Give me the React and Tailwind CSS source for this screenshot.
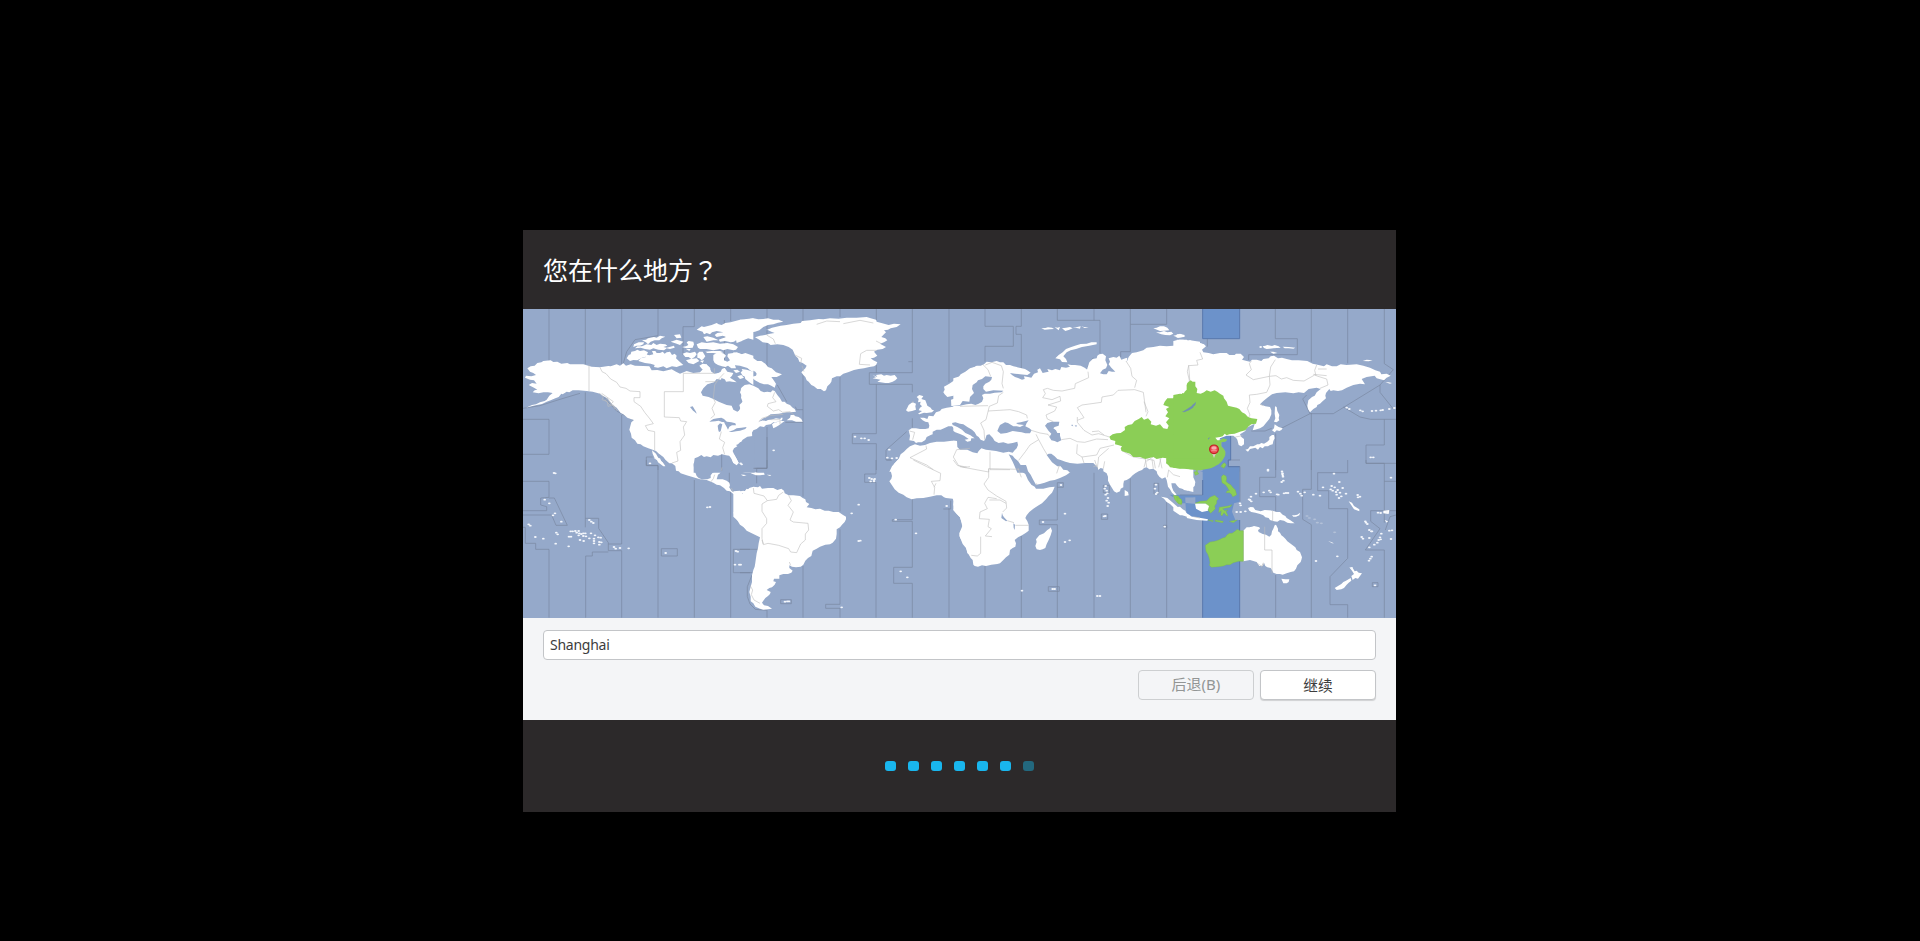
import React from 'react';

const SEA = '#95a9ca';
const BAND = '#6c92ca';
const GREEN = '#8bce56';

/* The map is drawn in eight sheets, each with its own origin. */
const SHEETS = [
  {
    x: 0, y: 0,
    zones:
      'M87 12V168M196 12V178M305 12V182M414 12V92L345 104 320 140 310 175M523 12V65H489V150M613 45V200M632 12V48M9 343H87V448H9M9 310L60 302 120 283 180 265M196 262V495M305 330V495M414 482V495M414 482H379V456H398M250 275 290 318 340 345',
    land: [
      'M22 190 32 184 44 182 52 174 64 172 70 168 92 166 100 171 112 170 124 176 142 174 150 178 190 178 215 185 240 187 265 183 272 184 290 178 300 182 310 175 318 182 332 178 345 182 370 183 388 184 395 196 412 195 430 199 455 193 468 200 480 206 500 198 520 204 540 202 552 190 558 178 568 186 574 200 584 206 596 204 606 214 603 224 590 222 582 232 562 238 550 250 543 262 548 272 566 276 580 282 596 290 620 300 635 302 640 314 652 320 662 314 658 300 668 290 665 272 660 262 666 246 690 242 700 475 448 475 436 464 430 456 415 445 408 438 398 434 385 430 370 424 362 418 352 416 345 406 335 398 333 386 328 374 334 352 342 345 334 343 322 338 310 328 302 324 290 308 278 300 268 288 262 280 248 272 240 266 232 264 218 260 200 258 176 256 158 256 148 262 140 260 128 268 124 266 116 276 106 280 92 286 80 290 66 297 50 300 34 304 18 308 36 300 48 298 60 292 74 288 80 284 88 272 98 264 84 262 70 262 56 265 38 262 44 256 52 254 42 248 26 240 36 234 50 236 42 226 30 224 15 218 18 212 34 214 48 210 40 204 30 200Z',
      'M396 436 408 446 412 454 420 466 428 472 436 484 430 484 422 478 414 472 410 462 404 460 398 446Z',
      'M320 160 326 150 332 148 334 140 345 138 352 134 360 138 372 136 384 142 380 150 376 156 366 158 352 166 340 165 330 168Z',
      'M355 168 362 160 378 156 370 150 376 148 388 151 400 148 396 138 406 138 410 144 420 144 428 140 434 146 440 142 450 140 456 150 464 146 470 152 468 160 474 166 490 180 480 182 470 186 456 184 440 190 430 184 425 185 414 188 402 186 404 180 392 176 375 174Z',
      'M342 118 356 112 372 112 370 118 360 122 350 122 340 126ZM366 106 378 104 384 100 402 96 410 98 420 92 436 95 425 100 418 106 404 106 392 110 384 118 378 112ZM345 130 352 124 366 124 380 118 394 120 400 114 410 120 420 116 436 118 442 122 430 126 440 128 462 122 464 128 450 132 440 130 432 136 415 134 400 130 390 134 375 132 362 128ZM452 110 470 104 490 110 480 120 470 116ZM462 90 480 88 484 98 470 100Z',
      'M486 126 498 124 505 120 500 112 506 108 520 110 522 118 518 128 500 130ZM488 146 500 142 510 144 525 140 530 148 524 156 514 162 506 156 496 156ZM498 166 512 162 530 160 538 168 520 178 506 174ZM532 146 538 140 548 140 556 154 550 162 545 166 538 160 532 158ZM538 182 548 176 560 178 564 184 572 190 562 196 550 196 544 190ZM540 168 552 166 548 174ZM498 132 512 132 508 138Z',
      'M530 74 545 64 552 66 575 60 590 54 596 58 605 60 616 54 632 52 646 48 660 44 674 45 700 40 700 56 680 60 665 66 676 70 690 72 700 76 700 104 684 100 670 106 650 104 642 110 632 112 616 108 600 110 596 104 618 96 608 92 590 96 584 90 592 84 610 82 590 78 576 82 570 88 560 84 552 88 548 80Z',
      'M550 96 562 94 580 98 596 106 580 106 560 110ZM530 118 545 112 560 114 580 112 600 116 622 114 640 118 654 126 648 134 640 136 622 132 610 136 600 132 580 136 560 132 540 132 534 128ZM556 140 575 138 600 138 610 142 592 146 580 144 562 144Z',
      'M580 150 590 144 600 142 612 146 618 152 612 160 612 166 622 170 630 166 622 154 624 146 640 144 650 142 665 148 676 144 700 152 700 202 690 196 680 186 670 180 664 172 655 176 644 178 648 190 634 190 624 182 616 186 606 184 594 180 584 174 580 166Z',
      'M588 208 602 200 606 192 614 188 622 200 640 204 636 212 630 218 642 226 650 232 636 230 620 226 612 222 606 220 598 214Z',
      'M612 216 622 218 636 228 618 230ZM640 196 652 194 660 200 648 204ZM652 214 664 210 672 218 660 222ZM665 192 680 194 700 200 700 240 688 232 676 222 672 206Z',
    ],
    water: [
      'M568 350 574 346 580 342 592 340 604 338 612 342 618 348 622 352 606 351 596 347 586 349Z',
      'M595 376 593 362 600 355 607 358 605 366 602 379 597 381Z',
      'M612 352 622 350 634 352 646 355 648 361 636 361 628 365 624 374 620 366Z',
      'M626 380 640 376 650 370 664 368 680 366 676 372 660 377 648 379 636 381Z',
      'M510 306 518 304 528 320 530 326 518 316Z',
      'M668 404 664 410 660 412 654 418 648 420 652 424 642 430 638 438 642 448 650 462 656 474 650 481 640 474 634 460 628 452 618 451 606 448 594 452 580 450 572 457 560 454 552 456 544 450 534 456 524 460 521 480 521 503 704 503 704 392 682 395Z',
    ],
    borders:
      'M207 178V258M240 187 246 200 258 206 272 222 290 232 300 246 318 250 330 258 360 260V278H342V290L362 304 374 322 390 342 400 356 376 362 384 376 404 380V436M583 190V205H490V260H433V336L478 338 482 348 500 350 490 366 494 390 480 410 482 436 470 442 474 468 456 474M612 205 596 222 584 240 580 280 586 292 576 310 584 330 572 340M604 380 598 402 614 412 608 428 614 448M556 230H590M238 264 250 276 246 284 262 290 264 304 280 300 292 318M245 265 280 290 270 300 256 285 262 280 285 312',
    specks: [],
  },
  {
    x: 660, y: 0,
    zones:
      'M81 12V72M81 76V205M189 12V50M189 200V495M300 12V36M300 216V495M409 12V45M409 180V203M409 238V386H337V416H409V495M517 12V203H388V238H517V262M505 170H517M517 340V368M627 12V232M136 352H189M166 305 170 314H189M81 366V490H40M500 380 438 435V465H455M112 240 140 290',
    land: [
      'M-20 66 0 44 20 42 40 40 55 43 70 42 84 40 100 44 116 44 130 50 114 53 100 58 84 60 70 66 58 76 45 80 34 82 20 90 28 98 12 102 6 108 -10 114Z',
      'M-20 142 0 146 12 150 20 150 30 158 40 160 52 168 64 168 76 176 84 186 95 190 108 202 126 208 118 212 110 216 94 216 100 224 108 236 104 248 94 242 84 238 72 238 60 234 45 226 34 216 48 212 50 206 46 200 34 194 20 188 0 182 -20 180Z',
      'M2 202 10 196 18 196 30 206 26 218 8 212Z',
      'M8 245 14 240 28 238 40 242 55 250 62 258 72 262 82 260 92 262 98 256 104 258 112 270 120 280 126 290 134 290 140 296 150 300 158 308 164 312 168 320 152 322 140 322 116 326 92 328 80 336 68 346 78 348 90 342 108 338 128 338 126 346 114 350 100 352 92 358 78 360 72 366 60 364 50 372 40 376 34 386 24 392 22 400 14 400 22 410 14 418 0 426 -20 436 -18 340 0 312 8 290 3 278 6 262 2 252Z',
      'M140 346 150 338 152 330 162 330 166 334 176 336 184 342 188 350 168 350 156 346Z',
      'M96 358 104 352 110 352 120 348 134 348 126 354 118 360 108 366 100 370Z',
      'M45 97 60 92 75 90 90 86 104 84 94 80 82 74 96 68 122 62 140 60 160 56 182 54 186 48 210 46 236 42 250 43 270 40 296 41 320 38 350 38 380 36 392 40 408 44 410 50 424 54 446 60 462 56 482 58 470 66 452 70 444 74 432 76 438 82 432 88 424 96 436 100 442 106 432 112 420 116 438 126 428 132 412 134 402 140 412 152 402 158 392 160 400 166 412 172 408 180 402 184 388 186 372 190 356 192 342 195 324 202 310 206 300 214 290 214 276 220 274 230 270 236 262 244 258 256 252 259 242 252 232 252 222 244 214 240 206 230 200 226 196 216 190 210 184 202 196 190 200 182 188 174 178 170 174 160 166 152 158 134 146 126 130 120 112 118 92 120 84 114 68 112 58 104Z',
      'M398 210 412 216 408 210 424 208 432 212 440 210 452 212 464 210 472 220 466 226 458 230 446 234 436 234 422 232 412 230 422 224 410 222 398 220 408 217Z',
      'M506 300 514 294 518 292 528 296 526 304 528 314 516 318 504 320 498 316 502 308Z',
      'M530 276 538 270 546 272 550 274 544 282 556 286 560 296 562 302 572 308 576 314 582 316 576 322 560 324 552 323 538 328 534 326 546 318 536 316 540 308 546 304 540 298 542 290 534 292 536 282Z',
      'M612 245 628 236 640 228 648 222 656 216 662 208 676 200 690 190 710 184 710 284 690 292 678 294 672 290 668 286 664 278 662 270 650 266 640 272 622 276 614 268 610 262 614 254Z',
      'M633 284 648 279 650 286 646 292 654 300 646 304 634 303Z',
      'M710 296 690 302 675 300 660 303 648 304 635 306 620 308 605 312 600 318 588 322 580 334 566 332 562 342 552 338 540 338 548 346 556 350 565 352 568 362 566 370 556 372 540 372 528 370 515 370 506 376 510 392 508 406 522 408 528 414 534 412 545 412 556 405 560 396 572 390 578 388 578 380 590 374 602 374 612 370 625 364 636 364 644 372 655 380 664 388 672 390 690 398 710 404Z',
      'M448 500 456 484 468 470 476 462 482 448 492 440 500 432 510 424 525 418 540 422 555 420 570 414 590 410 612 410 630 408 645 406 652 412 652 426 664 432 672 440 710 440 710 500Z',
    ],
    water: ['M56 350 70 340 84 336 108 332 122 336 122 342 108 340 92 344 76 344ZM612 388 620 378 619 384Z'],
    borders:
      'M104 262 98 278 108 290 84 296 82 304 100 318 116 314 128 322 150 320 162 330M56 350 66 340 90 332 130 328M92 344H120V358M80 90 100 102 106 116M410 136H380L362 146 358 178 390 180M230 58 260 48 300 50M310 56 360 46 400 54M408 108 424 116M165 150 185 160 182 176M186 182 192 200M508 378 524 382 518 404M558 422 560 432 510 458 560 480 580 494M690 430 650 434 640 456 656 482 680 486M520 288 516 294',
    specks: [[101, 436], [345, 395], [364, 400], [374, 400], [386, 405], [448, 434], [442, 458], [456, 460], [470, 459], [5, 478]],
  },
  {
    x: 1320, y: 0,
    zones:
      'M75 12V64H160V124H75V170M184 12V64H168V88H184V190M292 12V46H402M402 12V46H420V145M383 185 400 158M511 12V58H620V12M511 58V140H482V156',
    land: [
      'M-20 220 0 214 10 206 18 202 26 194 34 192 50 182 62 182 72 178 80 170 94 172 110 168 120 172 130 172 138 180 150 180 160 184 178 188 195 192 205 198 212 203 202 210 180 208 165 206 150 204 156 210 165 216 176 220 186 224 194 222 192 214 204 216 214 218 222 206 234 202 232 194 240 190 248 204 258 202 266 200 262 192 276 196 286 192 300 196 304 186 318 188 330 185 322 178 334 180 345 180 362 182 374 188 384 196 386 210 380 198 384 184 388 172 398 162 410 160 412 152 418 148 428 146 438 154 436 166 442 180 438 190 428 194 420 205 430 208 440 208 446 198 456 200 466 200 454 188 446 178 450 170 446 160 460 156 470 158 478 152 484 164 496 160 502 158 500 172 506 156 516 144 530 142 550 136 560 128 580 126 600 122 620 124 640 122 662 116 676 108 690 106 720 110 720 480 -20 480Z',
      'M410 112 394 112 380 116 362 117 345 122 334 126 318 132 308 142 296 150 286 160 300 163 306 171 322 172 318 162 310 154 320 142 332 136 348 132 366 126 388 122 410 118Z',
      'M580 70 590 68 600 64 612 64 622 68 628 76 612 77 600 78ZM588 82 600 82 612 78 622 82 634 80 640 86 630 91 616 90 604 88ZM640 92 650 90 660 86 676 94 668 96 655 98Z',
      'M644 108 660 104 680 104 690 112 674 114 660 114Z',
      'M244 70 256 69 264 67 276 68 282 72 270 73 254 74ZM284 66 292 68 300 66 296 76ZM306 70 318 68 330 66 338 70 328 74 316 78ZM338 66 348 67 362 64 360 71ZM364 64 372 66 386 66 374 69Z',
    ],
    water: [
      'M-25 302 0 300 8 288 28 290 30 276 42 264 36 252 38 240 50 232 54 226 66 222 76 214 96 216 94 224 88 230 76 236 70 244 70 252 78 260 100 256 130 257 125 262 104 263 90 266 74 266 66 270 70 280 66 290 56 296 46 300 34 296 20 298 0 302Z',
      'M-24 354 -14 352 0 356 10 358 22 366 36 374 44 382 50 392 56 396 62 404 72 408 76 402 80 390 88 388 98 398 104 408 116 414 130 412 144 416 158 414 172 410 174 420 170 430 164 436 158 443 146 440 130 443 108 438 90 436 78 434 64 430 56 438 52 445 38 442 22 434 0 434 -8 426 -9 408 -26 406 -26 374 -14 382 0 387 12 392 26 402 14 404 22 410 32 408 34 400 44 400 30 390 16 384 6 374 -8 366 -22 360Z',
      'M112 378 116 368 120 360 135 352 144 354 150 358 160 364 170 364 180 366 192 360 174 358 168 354 182 352 206 346 200 354 196 364 208 370 215 376 210 385 196 385 185 382 158 378 140 384 122 386Z',
      'M255 362 262 354 275 350 286 350 298 350 296 362 284 366 280 370 288 376 292 384 300 384 300 392 304 406 292 412 284 408 274 406 268 396 274 386 266 378Z',
      'M334 362 336 358 340 364ZM344 362 350 360 349 366Z',
      'M146 448 158 452 164 460 174 468 182 480 192 488 200 503 172 503 164 484 158 470Z',
      'M260 450 266 446 274 446 284 454 292 462 304 466 316 470 330 474 352 476 376 474 400 474 408 482 414 488 414 503 330 503 322 496 310 494 302 484 292 484 276 472Z',
    ],
    borders:
      'M76 180 96 172 124 182 130 200 126 236 130 250M68 178 84 194 92 214M130 262 116 272 112 294 88 304 78 344 62 354 72 376 74 404M0 304 84 302M84 318 150 314 176 320 200 330 202 340M214 376 240 384 264 388 270 396M228 388 236 404 210 420 196 440 176 466M236 404 250 430 262 450M384 200 386 218 346 236 344 250 306 258M306 258 280 256 262 250 250 254 256 266 248 278 276 284 300 274 302 288 264 300 290 306 284 318 258 330 262 342 280 350M352 346 372 338 352 308 366 300 424 292 426 276 460 270 474 256 524 254 550 262 558 322M498 168 512 190 516 214 530 226 524 248M552 290 564 320 558 334M352 336 352 352 372 376 396 390 416 386 436 392 448 396M396 380 416 378 432 390M304 404 330 400 352 410 374 412 410 402 444 404M352 418 350 446 366 456 410 450 420 430 462 420M366 456 372 474M412 490 416 456 446 430M90 440V494H150M484 436 520 456 556 462 560 486M560 462 582 466 586 490M600 462 606 490M686 180 690 236',
    specks: [],
    green: [
      'M448 395 458 388 470 385 482 384 495 375 494 366 504 360 516 358 524 348 536 342 545 336 552 344 564 340 574 350 572 358 588 362 600 358 610 370 622 372 626 362 618 352 628 340 616 334 624 322 618 312 628 306 610 300 614 290 622 280 640 280 644 270 658 272 668 264 680 268 684 250 680 242 700 230 700 488 640 484 628 482 618 475 620 460 608 458 590 462 580 456 556 462 540 456 520 456 510 446 496 442 485 438 482 430 486 424 474 420 465 418 466 408 452 404Z',
    ],
    lakes: 'M668 320 696 302 700 296 700 308 680 318Z',
  },
  {
    x: 1980, y: 0,
    zones:
      'M82 101V125M206 165V149H352V101H286V12M394 12V170M503 12V175M613 12V176L640 194 600 240V262L640 312M394 324V495M287 385V495M380 270 368 282 390 326H460L600 240M390 326 300 372M275 370 255 378 214 378M490 306 540 336 572 343H648M613 343V420H558V475H648',
    land: [
      'M-20 108 0 104 12 112 28 112 44 116 58 114 72 118 78 124 66 134 70 142 86 144 100 148 120 144 140 144 148 150 164 150 168 146 182 146 192 156 186 164 200 168 210 170 216 164 230 164 244 168 250 162 266 160 272 154 282 152 294 160 306 158 320 162 336 166 356 166 382 168 398 176 416 180 432 184 440 178 456 184 470 184 482 178 500 180 530 178 550 182 570 188 586 196 600 200 604 208 620 206 632 212 620 218 612 226 590 220 584 212 560 216 545 222 555 238 540 236 520 240 500 248 486 256 474 258 460 256 452 258 448 252 438 264 436 272 438 280 426 290 420 296 412 300 410 306 400 312 390 322 384 312 382 302 384 292 385 286 396 276 404 272 410 262 422 252 410 248 386 252 372 264 356 262 340 265 316 262 290 264 276 268 262 278 250 288 240 298 256 304 270 306 274 316 274 328 268 342 258 354 250 364 240 370 225 374 218 376 222 364 224 356 212 362 200 368 196 378 180 388 184 396 192 402 192 418 184 424 176 420 172 404 168 398 160 392 140 392 120 400 100 475 -20 480Z',
      'M-10 88 4 88 14 90 12 96 -10 98ZM-10 104 10 104 20 108 30 106 44 112 60 114 70 118 76 124 66 132 30 142 0 150Z',
      'M248 124 256 122 262 120 276 123 284 120 296 124 302 128 280 130 260 132 252 129ZM308 125 326 126 346 128 340 131 326 130 314 130ZM270 140 280 140 292 144 280 146Z',
      'M548 168 560 164 578 166 566 169ZM616 232 626 232 636 234 630 236Z',
      'M196 434 204 432 210 424 220 424 232 418 238 418 244 414 252 416 262 410 268 404 268 396 276 390 282 390 284 400 280 408 278 418 270 420 264 424 254 424 248 430 240 426 234 434 226 428 210 432 204 440Z',
      'M276 376 282 370 284 358 290 362 296 366 308 370 304 375 298 378 290 376 284 382Z',
      'M285 304 290 306 292 318 298 330 296 340 298 346 290 352 282 350 286 340 284 326Z',
    ],
    water: [],
    borders:
      'M60 142 68 162 50 166 54 180 26 182 22 200 28 226 22 250M198 210 214 194 208 176 214 168M198 210 220 224 268 214 272 186 286 164M268 214 270 240 260 262 230 268 208 270 210 292 202 310 210 330 204 340M268 214 288 212 304 222 320 218 340 226 372 228 404 210 414 214 440 222 444 240 420 250M410 180 404 196 408 212M414 192H440M400 208 440 212M240 298 250 302M166 396 188 392',
    specks: [[242, 126], [508, 312], [541, 316], [548, 319], [576, 318], [588, 317], [602, 316], [608, 315], [628, 312], [643, 309], [572, 457], [580, 457], [500, 308], [264, 494]],
    green: [
      'M-20 270 0 266 10 268 14 260 20 254 20 240 22 234 32 226 38 230 46 230 46 244 52 252 50 264 62 266 72 262 80 256 92 260 104 256 112 260 120 266 130 272 132 280 140 290 144 302 160 306 170 308 178 312 186 322 195 326 204 336 215 340 232 342 228 356 214 358 206 364 196 376 180 380 164 386 148 388 140 391 134 386 128 394 120 396 106 398 112 406 120 406 130 400 142 404 136 410 124 412 124 424 132 432 136 440 136 450 132 458 126 468 116 478 104 484 92 490 60 496 -20 488Z',
      'M122 484 132 474 138 480 132 490Z',
    ],
    lakes: 'M6 320 26 314 40 298 48 290 46 300 30 314 12 322ZM92 396 84 400 84 404Z',
    band: 'M68 12H179V101H68ZM152 392V465H144V485H179V500H60L100 490 118 478 132 458 136 440 124 424 124 412 142 404 106 400 134 386Z',
  },
  {
    x: 0, y: 465,
    zones:
      'M9 64H87V112L62 114V135L80 140V152H9M9 165H95L108 196H142L103 114H87M9 202H16V250H47V268H87V473M196 0V202M196 175H236V205L265 248V272H305M265 252H305V0M265 276H217V288H197V473M305 272V473M379 0V16H414V473M523 60V473M632 95V473M424 266H472V288H424ZM640 268H690M640 268V338H690M605 0V32H628V85',
    land: [
      'M522 -10 521 14 523 30 530 48 536 54 545 58 562 58 572 54 572 46 578 38 590 32 604 32 600 40 594 44 590 58 608 58 620 62 628 68 630 76 628 82 634 92 640 97 650 98 662 94 670 92 680 96 678 104 666 100 650 102 640 102 630 94 620 92 612 84 600 76 590 74 580 68 560 60 540 58 520 52 500 46 482 40 476 34 468 32 466 18 454 8 440 -10Z',
      'M700 94 680 86 674 94 668 98 672 108 670 120 664 128 652 138 654 144 650 150 640 158 646 168 650 178 660 194 690 214 700 220Z',
      'M402 -5 420 -5 424 4 436 18 424 12 414 2Z',
      'M606 24 616 22 632 20 646 26 660 28 672 33 690 34 690 39 676 39 660 34 650 32 636 27 620 24ZM664 44 680 46 672 48Z',
      'M634 0 650 2 644 8Z',
    ],
    water: [],
    borders: 'M572 66 580 56 584 44M604 32 606 22M640 95 634 84',
    specks: [[102, 39], [106, 40], [74, 119], [88, 130], [105, 160], [99, 166], [124, 185], [26, 193], [31, 197], [46, 231], [70, 236], [109, 218], [113, 223], [107, 251], [146, 259], [208, 180], [214, 185], [220, 189], [152, 214], [158, 214], [166, 213], [176, 213], [170, 218], [178, 220], [184, 222], [176, 226], [190, 220], [196, 220], [190, 228], [198, 229], [213, 220], [208, 235], [225, 226], [222, 236], [222, 243], [235, 232], [242, 233], [238, 246], [244, 247], [222, 250], [238, 254], [180, 240], [191, 243], [147, 230], [153, 230], [282, 261], [287, 266], [300, 264], [326, 265], [437, 279], [562, 142], [570, 141], [648, 273], [653, 275], [645, 314], [658, 314], [390, 10], [662, 10]],
  },
  {
    x: 660, y: 465,
    zones:
      'M81 0V25H50V70M81 450V473M189 0V110M189 318V473M300 0V154M300 208V433H257V445H300V473M408 0V42H374V67H408V473M517 118V179H457V184H517V322H461V370H517V473M627 145V473M610 147H632V122M122 419H154V431H122ZM0 268H58M0 338H40M440 0H455M36 345 22 380 22 410 30 432 46 448 80 451',
    land: [
      'M-20 94 0 92 8 102 12 94 20 92 28 84 40 80 54 82 60 78 66 86 84 84 100 84 112 90 124 86 132 92 134 100 146 106 160 106 180 108 188 114 196 118 198 126 208 132 200 142 214 144 226 148 240 146 254 152 266 152 280 156 296 156 308 164 318 170 318 178 314 186 306 194 300 202 290 208 290 222 288 236 278 248 270 253 256 254 240 260 230 266 218 272 216 280 214 288 204 294 196 302 190 314 182 320 168 322 156 320 148 316 148 324 158 332 154 338 144 342 130 342 118 346 118 356 102 356 100 364 108 366 104 374 96 382 88 384 80 390 92 396 90 402 84 408 76 414 70 422 66 428 72 436 84 438 96 446 84 448 70 449 60 446 46 440 40 430 32 424 32 410 28 396 32 380 36 366 36 346 40 330 44 320 46 308 50 280 54 264 56 250 60 232 40 222 20 212 0 188 -20 170Z',
      'M478 -5 468 6 462 12 460 24 452 32 456 48 454 56 448 64 456 76 464 88 476 98 490 104 500 112 515 118 530 115 550 114 570 110 590 106 604 106 612 112 618 114 638 116 642 124 640 134 644 144 640 150 650 162 660 172 664 186 668 204 660 216 658 228 664 240 672 246 678 262 682 280 700 290 700 -5Z',
      'M-10 22 6 24 20 28 30 34 40 36 54 38 72 38 74 44 60 46 48 46 36 41 26 36 0 32ZM80 44 94 45 90 48ZM2 44 14 44 12 48Z',
    ],
    water: [],
    borders:
      'M40 84 42 100 72 108 82 122 66 132 66 154 80 176 80 190 66 206 66 236 70 252M82 122 110 118 116 106 130 96M146 106 154 122 144 136 160 156 150 180 160 186 204 190 206 210 196 222 196 240 182 252 170 278 152 276 146 266 116 256 84 250 70 254 66 240M148 306 152 316M520 0 560 20 602 40 600 62 574 64 584 82 582 104M640 0 652 16 672 22 690 20M588 70 582 82M30 376 38 390 34 404 42 420 60 430',
    specks: [[356, 134], [335, 160], [356, 243], [361, 242], [467, 179], [528, 220], [482, 334], [502, 352], [620, 138], [135, 425], [142, 424], [147, 424], [305, 442], [2, 314], [388, 54], [395, 57], [392, 64], [402, 64], [404, 57], [402, 60]],
  },
  {
    x: 1320, y: 465,
    zones:
      'M75 318V473M184 228V473M292 0V10H330M292 68V180H238V194H292V473M402 20V473M511 55V473M620 120V473M292 68H310V82H292M430 76H448V98H430ZM424 162H443V178H424ZM582 70H596V102H582ZM265 380H298V394H265ZM611 196H620V204H611Z',
    land: [
      'M-20 -5 160 -5 168 10 176 20 184 34 196 42 204 60 214 74 224 80 228 86 250 86 268 82 284 80 280 90 276 98 266 108 258 118 246 130 236 136 220 146 208 156 200 166 196 174 202 184 206 194 206 212 198 218 186 226 174 232 164 240 168 250 166 260 158 264 150 270 148 284 138 292 130 300 120 310 112 312 94 314 78 318 66 316 54 320 44 318 40 314 38 300 32 294 24 280 18 264 8 252 0 232 -2 220 8 196 0 172 -20 150Z',
      'M186 -5 194 6 200 20 204 34 212 44 220 60 228 74 240 72 254 68 270 62 284 60 300 54 318 46 332 36 344 24 338 16 326 14 318 8 312 -5Z',
      'M308 4 324 6 340 8 364 6 386 8 396 16 406 22 414 30 422 24 430 26 430 34 440 40 444 50 444 62 450 74 456 84 462 94 470 98 480 94 482 86 490 82 490 72 492 62 500 60 510 54 518 46 526 40 536 34 546 30 552 24 560 22 568 28 580 26 590 34 592 42 598 50 606 56 616 52 620 60 622 70 624 80 630 88 636 98 644 106 650 104 640 92 636 82 634 70 646 70 652 78 658 84 672 88 690 94 700 96 700 -5 308 -5Z',
      'M262 210 268 206 272 202 276 212 272 226 266 240 260 252 256 264 248 268 240 270 230 268 226 258 230 246 228 238 238 226 252 220Z',
      'M494 90 504 96 506 106 494 108Z',
      'M603 110 612 112 622 114 636 126 650 138 660 148 668 150 680 160 690 166 700 176 680 170 668 166 656 158 648 148 640 142 630 132 620 126 612 116Z',
    ],
    water: ['M126 158 128 166 132 172 142 182 138 184 124 174ZM160 190 165 194 164 210 161 204Z'],
    borders:
      'M0 20 86 36 86 26 178 28M86 26V52L72 72 84 90 110 108 138 124 140 144 128 156M84 112 110 116M84 112 74 130 82 146 60 156 58 176 88 178 84 200 94 206 76 228 96 230M88 120H120L138 130M62 230V280L52 288 34 286M166 196H206M142 182 162 188M174 24 184 52M230 70 228 76M290 40 298 16M404 0 410 18 400 20M434 4 430 26M552 22 558 0M576 -2 580 26M604 -10 596 22M622 52 626 30 640 44 660 50M580 -10 560 4',
    specks: [[315, 161], [329, 241], [315, 246], [249, 186], [186, 392], [278, 387], [284, 387], [412, 408], [420, 408], [437, 78], [434, 86], [440, 92], [442, 100], [437, 104], [444, 114], [440, 122], [446, 128], [443, 138], [432, 169], [436, 168], [588, 74], [585, 86], [592, 98], [614, 200], [588, 102], [303, 75]],
    green: ['M618 -5 622 10 630 22 660 26 700 22 700 -5Z', 'M640 106 654 108 666 124 664 134 652 128 644 118Z'],
    band: 'M628 104H700V112H676V130H666L654 108 640 106 640 112Z',
  },
  {
    x: 1980, y: 465,
    zones:
      'M180 0H144V20H180V125M68 60V105H0M287 0V52H239V110H287V165M287 345V473M394 0V88H368V178L394 194V473M503 0V38H413V92H446V146H503V295L450 350V434H503V473M558 0V10H613V188M613 64H648M648 152H572V184L600 206 556 270H613V473M648 165 630 170 616 210M577 368H594V380H577Z',
    land: [
      'M-20 20 10 22 24 28 26 36 34 44 42 56 46 66 44 78 36 84 24 92 12 90 6 84 -20 60Z',
      'M-20 142 0 140 8 148 16 152 22 166 0 166 -20 152ZM22 168 50 172 84 178 82 182 50 180 20 174ZM45 130 84 130 90 140 84 152 66 156 48 146Z',
      'M204 144 212 141 220 142 226 150 242 154 254 150 266 151 278 152 290 156 300 156 308 164 316 168 320 174 330 180 344 190 332 190 322 188 312 182 300 180 292 185 282 184 270 180 266 174 256 172 250 166 240 162 226 158 214 156 208 152Z',
      'M336 166 344 166 352 164 360 158 358 166 348 170 340 170Z',
      'M190 212 200 202 208 202 216 200 222 198 238 202 240 206 234 210 236 216 248 222 258 224 268 230 274 224 276 214 280 206 284 196 288 194 294 206 294 214 300 218 304 226 310 230 316 236 322 244 330 250 346 262 350 270 360 276 366 292 364 300 362 306 352 316 348 326 342 334 332 336 320 340 308 344 300 342 290 342 280 338 276 330 272 324 262 322 256 318 252 308 248 318 238 318 230 306 210 300 190 304Z',
      'M304 356 316 358 328 358 326 366 320 370 310 370Z',
      'M508 322 518 324 524 334 530 332 536 338 546 340 540 348 534 356 526 354 518 360 514 348 522 342 516 332Z',
      'M512 354 514 362 506 368 500 374 492 384 484 388 470 390 464 384 474 378 484 372 490 366 498 362Z',
      'M506 124 516 128 522 138 538 148 538 154 522 148ZM614 180 624 184 620 188ZM610 152 628 150 626 162 610 160ZM444 242 462 250 456 250ZM305 34 312 46 308 52 304 44Z',
    ],
    water: [],
    borders: 'M190 212V304M254 200V270H276V340M278 152V184M250 308 244 322M40 170 60 174M232 310 244 318 252 312',
    specks: [[264, 32], [306, 34], [308, 40], [309, 50], [310, 62], [305, 66], [228, 101], [251, 97], [268, 92], [272, 97], [291, 103], [295, 104], [312, 100], [318, 99], [324, 99], [354, 95], [361, 101], [365, 107], [374, 97], [400, 104], [420, 107], [429, 82], [462, 41], [478, 66], [455, 78], [464, 82], [452, 88], [458, 92], [468, 96], [473, 90], [488, 84], [480, 98], [470, 104], [484, 109], [498, 101], [477, 114], [533, 105], [540, 110], [534, 112], [633, 53], [213, 110], [210, 120], [214, 124], [207, 118], [180, 130], [182, 136], [170, 156], [182, 156], [196, 154], [472, 289], [408, 303], [594, 158], [602, 159], [620, 156], [558, 188], [562, 192], [556, 184], [568, 210], [576, 214], [545, 231], [549, 236], [568, 234], [604, 221], [600, 232], [596, 240], [602, 238], [592, 248], [583, 254], [568, 262], [574, 214], [628, 212], [636, 211], [633, 237], [575, 290], [571, 296], [567, 302], [585, 376], [515, 324]],
    faint: [[381, 168], [388, 174], [404, 178], [412, 188], [424, 190], [464, 217]],
    green: [
      'M-20 -5 124 -5 118 6 112 12 102 20 92 24 78 25 64 28 56 30 50 34 44 28 30 28 16 24 0 22 -20 22Z',
      'M42 36 52 34 56 42 46 46ZM126 14 134 8 138 14 130 24Z',
      'M45 130 60 124 80 122 90 112 104 106 116 116 110 122 110 130 104 138 106 146 100 152 92 160 84 150 88 138 76 130Z',
      'M124 50 130 44 138 48 140 56 138 64 144 70 152 74 158 82 166 90 170 104 164 108 158 110 154 102 148 98 138 98 142 92 148 92 142 82 136 74 126 68Z',
      'M118 142 130 140 144 138 156 134 150 142 128 146 134 152 144 150 138 154 144 168 138 166 132 158 126 168 122 164 124 152 116 158Z',
      'M76 256 90 246 104 244 116 240 128 234 136 232 140 226 148 220 156 220 162 216 172 208 180 212 190 212 190 304 176 304 160 308 150 314 140 314 130 318 116 320 94 322 88 316 90 308 88 296 84 284 78 274Z',
      'M-10 112 4 118 6 130 -4 132ZM84 180 100 182 98 185ZM106 180 130 184 128 188 106 184ZM148 184 172 180 160 188Z',
    ],
    band: 'M68 60V30L60 24 124 -5 144 -5V20H179V125L162 130 156 155 166 180H179V473H68V180L40 172 22 166 18 150 16 126 0 112V105H68ZM46 112H14V128L46 132Z',
  },
];

function Sheets({ pick }) {
  return SHEETS.map((s, i) => (
    <g key={i} transform={`translate(${s.x} ${s.y})`}>
      {pick(s)}
    </g>
  ));
}

function WorldMap() {
  return (
    <svg className="block h-[309px] w-[873px] shrink-0" viewBox="9 12 2619 927" preserveAspectRatio="none" aria-label="时区地图">
      <rect x="9" y="12" width="2619" height="927" fill={SEA} />
      <Sheets pick={(s) => s.band && <path d={s.band} fill={BAND} fillRule="evenodd" />} />
      <Sheets pick={(s) => <path d={s.zones} fill="none" stroke="#78869f" strokeOpacity="0.75" strokeWidth="2.6" />} />
      <path d="M2048 12V113H2158V12M2048 101H2158" fill="none" stroke="#5578b4" strokeWidth="0" />
      <path d="M2048 12V101H2159V12M2132 392V465H2125V485H2159M2048 525V570M2048 645V938M2159 645V938" fill="none" stroke="#5a78ad" strokeWidth="3" />
      <Sheets pick={(s) => s.land.map((d, i) => <path key={i} d={d} fill="#fff" />)} />
      <Sheets pick={(s) => s.water.map((d, i) => <path key={i} d={d} fill={SEA} />)} />
      <path d="M605 448V497M741 396V490H700" fill="none" stroke="#78869f" strokeOpacity="0.75" strokeWidth="2.6" />
      <path d="M634 440 642 448 650 462 656 474 650 481 640 474 634 460 628 452Z" fill="#fff" />
      <Sheets pick={(s) => s.borders && <path d={s.borders} fill="none" stroke="#bdbdbd" strokeWidth="1.8" strokeLinejoin="round" />} />
      <Sheets pick={(s) => s.specks.map(([x, y], i) => <ellipse key={i} cx={x} cy={y} rx="4" ry="2.8" fill="#f4f7fc" />)} />
      <Sheets pick={(s) => s.faint && s.faint.map(([x, y], i) => <ellipse key={i} cx={x} cy={y} rx="5" ry="2.4" fill="#b3c1d8" />)} />
      <Sheets pick={(s) => s.green && s.green.map((d, i) => <path key={i} d={d} fill={GREEN} stroke="#78b548" strokeWidth={i ? 1 : 0} />)} />
      <Sheets pick={(s) => s.lakes && <path d={s.lakes} fill="#6f91ae" />} />
      <g transform="translate(2082 433)">
        <path d="M-6 12 0 26 6 12Z" fill="#d9d2c8" />
        <circle r="13" fill="#ee4f57" stroke="#c01c22" strokeWidth="3.5" />
        <ellipse cy="-4" rx="8" ry="5" fill="#f9a9ad" />
        <path d="M-8 4H8" stroke="#f9b4b4" strokeWidth="2" />
      </g>
    </svg>
  );
}

export default function App() {
  const steps = [true, true, true, true, true, true, false];
  return (
    <div className="flex h-[941px] w-[1920px] items-start overflow-hidden bg-black pl-[523px] pt-[230px] font-['Noto_Sans','Noto_Sans_CJK_SC',sans-serif]">
      <div className="flex h-[582px] w-[873px] flex-col bg-[#2c292a]">
        <header className="flex h-[79px] shrink-0 items-center pl-5">
          <h1 className="font-['Noto_Sans_CJK_SC',sans-serif] text-[25px] leading-none font-normal text-white">
            您在什么地方<span lang="zh-Hant" className="font-['Noto_Sans_CJK_TC',sans-serif]">？</span>
          </h1>
        </header>
        <WorldMap />
        <div className="flex h-[102px] shrink-0 flex-col bg-[#f4f5f7] px-5 pt-3">
          <input
            defaultValue="Shanghai"
            className="h-[30px] w-full rounded-[4px] border border-[#c3c5c8] bg-white px-1.5 pb-0.5 font-['Noto_Sans',sans-serif] text-[14px] tracking-[-0.25px] text-[#3d3d3d] outline-none"
          />
          <div className="mt-2.5 flex justify-end gap-1.5">
            <button className="h-[30px] w-[116px] rounded-[4px] border border-[#cdcfd1] bg-[#f4f5f7] pb-px text-[15px] leading-none text-[#929595]">后退(B)</button>
            <button className="h-[30px] w-[116px] rounded-[4px] border border-[#c3c5c8] bg-white text-[14.7px] leading-none text-[#3d3d3d] shadow-[0_1px_1px_rgba(0,0,0,0.15)]">继续</button>
          </div>
        </div>
        <footer className="flex h-[92px] items-center justify-center gap-3">
          {steps.map((done, i) => (
            <span key={i} className={`h-[10px] w-[11px] rounded-[3px] ${done ? 'bg-[#19b6ee]' : 'bg-[#23687e]'}`} />
          ))}
        </footer>
      </div>
    </div>
  );
}
